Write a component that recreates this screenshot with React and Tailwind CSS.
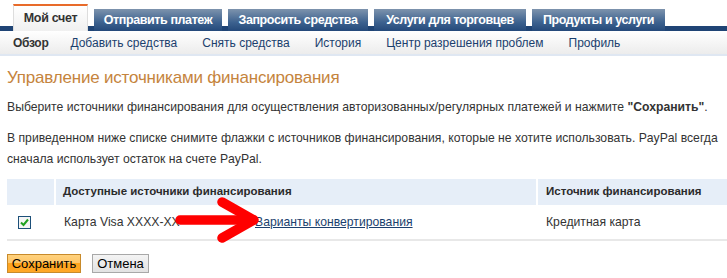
import React from 'react';

const tabs = [
  { label: 'Отправить платеж', w: 'w-[128px]' },
  { label: 'Запросить средства', w: 'w-[140px]' },
  { label: 'Услуги для торговцев', w: 'w-[152px]' },
  { label: 'Продукты и услуги', w: 'w-[133px]' },
];

const subnav = ['Добавить средства', 'Снять средства', 'История', 'Центр разрешения проблем', 'Профиль'];

export default function App() {
  return (
    <div className="w-[727px] h-[278px] bg-white overflow-hidden font-['Liberation_Sans',Arial,sans-serif] text-[12.2px] text-[#333]">
      {/* top tabs */}
      <div className="relative h-[31px] pt-[4px] flex items-end pl-[13px] gap-[6px] bg-[linear-gradient(to_bottom,transparent_26px,#1f4475_26px)]">
        <div className="w-[75px] h-[27px] border-t-2 border-[#e86b2a] bg-[linear-gradient(#ffffff,#f0f0f0)] flex items-center justify-center font-bold text-[12.5px] tracking-[-0.3px] text-[#333] z-10 border-x border-x-[#ddd]">
          Мой счет
        </div>
        {tabs.map((t) => (
          <div
            key={t.label}
            className={`${t.w} h-[22px] bg-[linear-gradient(#7d93ad,#3d628f_60%,#24497a)] flex items-center justify-center font-bold text-[12.5px] tracking-[-0.4px] text-white`}
          >
            {t.label}
          </div>
        ))}
      </div>

      {/* sub nav */}
      <div className="h-[25px] flex items-center pl-[13px] bg-[linear-gradient(#ffffff,#ececec)] border-b-2 border-[#dfe7f2] text-[12px]">
        <span className="font-bold text-[#333] tracking-[-0.3px] mr-[22px]">Обзор</span>
        <div className="flex gap-[25px]">
          {subnav.map((s) => (
            <span key={s} className="text-[#1b3f6e]">{s}</span>
          ))}
        </div>
      </div>

      <div className="pl-[7px]">
        <h1 className="mt-[12px] text-[17px] leading-[20px] text-[#c5843d] tracking-[-0.2px]">
          Управление источниками финансирования
        </h1>
        <p className="mt-[11px] leading-[16px]">
          Выберите источники финансирования для осуществления авторизованных/регулярных платежей и нажмите{' '}
          <b>"Сохранить"</b>.
        </p>
        <p className="mt-[13px] leading-[21px]">
          В приведенном ниже списке снимите флажки с источников финансирования, которые не хотите использовать. PayPal всегда
          сначала использует остаток на счете PayPal.
        </p>

        {/* table */}
        <div className="relative mt-[9px]">
          <div className="h-[26px] flex bg-[#e6eef8] font-bold text-[11.5px] text-[#2b2b2b]">
            <div className="w-[49px] border-r-2 border-white" />
            <div className="w-[482px] pl-[7px] flex items-center border-r-2 border-white">Доступные источники финансирования</div>
            <div className="flex-1 pl-[8px] flex items-center">Источник финансирования</div>
          </div>
          <div className="h-[36px] flex items-center border-b-2 border-[#e8e8e8]">
            <div className="w-[49px] pl-[11px]">
              <div className="w-[13px] h-[13px] border border-[#1c4f79] bg-[#f5f5f5] flex items-center justify-center">
                <svg width="9" height="9" viewBox="0 0 9 9">
                  <path d="M1 4.5 L3.5 7 L8 1.5" fill="none" stroke="#21a121" strokeWidth="2" />
                </svg>
              </div>
            </div>
            <div className="w-[482px] pl-[8px] flex items-center">
              <span className="w-[191px]">Карта Visa XXXX-XX</span>
              <a className="underline text-[#1b3f6e]">Варианты конвертирования</a>
            </div>
            <div className="flex-1 pl-[8px]">Кредитная карта</div>
          </div>
          {/* red arrow overlay */}
          <svg className="absolute left-[168px] top-[18px]" width="92" height="50" viewBox="0 0 92 50">
            <g stroke="#ff0000" strokeWidth="9.5" strokeLinecap="round" strokeLinejoin="round" fill="none">
              <path d="M5 23 H78" />
              <path d="M47 5 L79 23 L47 41" />
            </g>
          </svg>
        </div>

        {/* buttons */}
        <div className="mt-[13px] flex gap-[11px]">
          <button className="w-[74px] h-[19px] border border-[#c88a2a] bg-[linear-gradient(#ffd27d,#ffc466_50%,#ffa41c_50%,#ffa726)] text-[13px] text-black leading-none">
            Сохранить
          </button>
          <button className="w-[57px] h-[19px] border border-[#a8a8a8] bg-[linear-gradient(#f4f4f4,#e2e2e2)] text-[13px] text-black leading-none">
            Отмена
          </button>
        </div>
      </div>
    </div>
  );
}
